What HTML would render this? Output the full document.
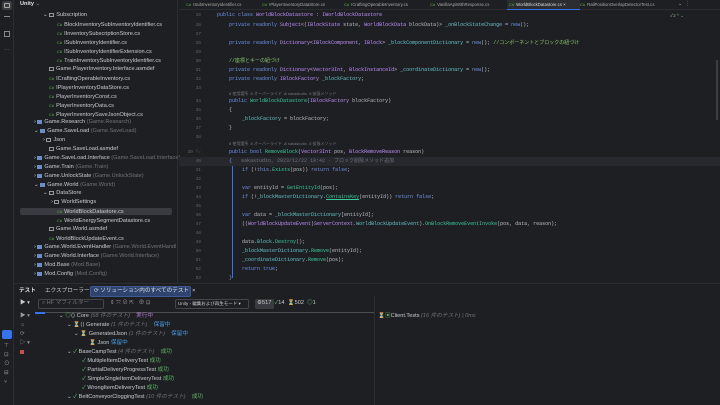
<!DOCTYPE html>
<html><head><meta charset="utf-8"><style>
*{margin:0;padding:0;box-sizing:border-box}
body{width:720px;height:405px;overflow:hidden;background:#1e1f22;font-family:"Liberation Sans","Noto Sans CJK JP",sans-serif;color:#c9ccd1;position:relative}
.a{position:absolute;white-space:nowrap}
.s{font-size:5.6px;line-height:9px}
.g{color:#6f737a}
.m{font-family:"Liberation Mono","Noto Sans CJK JP",monospace;font-size:5px;line-height:9px;color:#bcbec4}
.k{color:#6c95eb}.t{color:#c191ff}.f{color:#66c3cc}.mt{color:#39cc9b}.c{color:#85c46c}.h{color:#6f737a;font-size:4px}
.ln{position:absolute;left:183px;width:18px;text-align:right;font-family:"Liberation Mono",monospace;font-size:4.5px;color:#5f636b;line-height:9px}
.ic{display:inline-block;width:5px;height:4px;margin-right:2px;vertical-align:middle}
.cs{color:#62b543;font-size:4px;margin-right:2px}
</style></head><body>
<!-- activity bar -->
<div class="a" style="left:0;top:0;width:14px;height:405px;background:#1e1f22;border-right:1px solid #2b2d30"></div>
<div class="a" style="left:2px;top:1px;width:10px;height:9px;background:#3a3d41;border-radius:2px"></div>
<div class="a" style="left:4px;top:3px;width:6px;height:5px;border:1px solid #aaa;border-radius:1px"></div>
<div class="a" style="left:4px;top:16px;width:6px;height:1px;background:#888"></div>
<div class="a" style="left:4px;top:31px;width:6px;height:6px;border:1px solid #888"></div>
<div class="a" style="left:4px;top:47px;color:#888;font-size:5px">···</div>
<!-- sidebar -->
<div class="a" style="left:14px;top:0;width:164px;height:283px;background:#1e1f22;border-right:1px solid #2b2d30"></div>
<div class="a s" style="left:20px;top:0;color:#dfe1e5;font-weight:bold">Unity <span class="g">⌄</span></div>
<div class="a" style="left:20px;top:208px;width:152px;height:7px;background:#393b40;border-radius:2px"></div>
<div class="a s" style="left:43px;top:11px">⌄ <span class="ic" style="border:1px solid #999"></span>Subscription</div>
<div class="a s" style="left:57px;top:20px"><span class="cs">C#</span>BlockInventorySubInventoryIdentifier.cs</div>
<div class="a s" style="left:57px;top:29px"><span class="cs">C#</span>IInventorySubscriptionStore.cs</div>
<div class="a s" style="left:57px;top:38px"><span class="cs">C#</span>ISubInventoryIdentifier.cs</div>
<div class="a s" style="left:57px;top:47px"><span class="cs">C#</span>ISubInventoryIdentifierExtension.cs</div>
<div class="a s" style="left:57px;top:56px"><span class="cs">C#</span>TrainInventorySubInventoryIdentifier.cs</div>
<div class="a s" style="left:49px;top:65px"><span class="ic" style="border:1px solid #999"></span>Game.PlayerInventory.Interface.asmdef</div>
<div class="a s" style="left:49px;top:74px"><span class="cs">C#</span>ICraftingOperableInventory.cs</div>
<div class="a s" style="left:49px;top:83px"><span class="cs">C#</span>IPlayerInventoryDataStore.cs</div>
<div class="a s" style="left:49px;top:92px"><span class="cs">C#</span>PlayerInventoryConst.cs</div>
<div class="a s" style="left:49px;top:101px"><span class="cs">C#</span>PlayerInventoryData.cs</div>
<div class="a s" style="left:49px;top:110px"><span class="cs">C#</span>PlayerInventorySaveJsonObject.cs</div>
<div class="a s" style="left:34px;top:118px">› <span class="ic" style="background:#6a8fc7"></span>Game.Research <span class="g">(Game.Research)</span></div>
<div class="a s" style="left:34px;top:127px">⌄ <span class="ic" style="background:#6a8fc7"></span>Game.SaveLoad <span class="g">(Game.SaveLoad)</span></div>
<div class="a s" style="left:43px;top:136px">› <span class="ic" style="border:1px solid #999"></span>Json</div>
<div class="a s" style="left:49px;top:145px"><span class="ic" style="border:1px solid #999"></span>Game.SaveLoad.asmdef</div>
<div class="a s" style="left:34px;top:154px">› <span class="ic" style="background:#6a8fc7"></span>Game.SaveLoad.Interface <span class="g">(Game.SaveLoad.Interface)</span></div>
<div class="a s" style="left:34px;top:163px">› <span class="ic" style="background:#6a8fc7"></span>Game.Train <span class="g">(Game.Train)</span></div>
<div class="a s" style="left:34px;top:172px">› <span class="ic" style="background:#6a8fc7"></span>Game.UnlockState <span class="g">(Game.UnlockState)</span></div>
<div class="a s" style="left:34px;top:181px">⌄ <span class="ic" style="background:#6a8fc7"></span>Game.World <span class="g">(Game.World)</span></div>
<div class="a s" style="left:43px;top:189px">⌄ <span class="ic" style="border:1px solid #999"></span>DataStore</div>
<div class="a s" style="left:51px;top:198px">› <span class="ic" style="border:1px solid #999"></span>WorldSettings</div>
<div class="a s" style="left:57px;top:207px"><span class="cs">C#</span>WorldBlockDatastore.cs</div>
<div class="a s" style="left:57px;top:216px"><span class="cs">C#</span>WorldEnergySegmentDatastore.cs</div>
<div class="a s" style="left:49px;top:225px"><span class="ic" style="border:1px solid #999"></span>Game.World.asmdef</div>
<div class="a s" style="left:49px;top:234px"><span class="cs">C#</span>WorldBlockUpdateEvent.cs</div>
<div class="a s" style="left:34px;top:243px">› <span class="ic" style="background:#6a8fc7"></span>Game.World.EventHandler <span class="g">(Game.World.EventHandl</span></div>
<div class="a s" style="left:34px;top:252px">› <span class="ic" style="background:#6a8fc7"></span>Game.World.Interface <span class="g">(Game.World.Interface)</span></div>
<div class="a s" style="left:34px;top:261px">› <span class="ic" style="background:#6a8fc7"></span>Mod.Base <span class="g">(Mod.Base)</span></div>
<div class="a s" style="left:34px;top:270px">› <span class="ic" style="background:#6a8fc7"></span>Mod.Config <span class="g">(Mod.Config)</span></div>
<!-- tabs -->
<div class="a" style="left:179px;top:0;width:541px;height:10px;border-bottom:1px solid #2b2d30"></div>
<div class="a" style="left:507px;top:0;width:73px;height:10px;background:#2b2d30;border-bottom:1px solid #3574f0"></div>
<div class="a" style="font-size:4.3px;top:2px;left:186px;color:#aaa;white-space:nowrap"><span class="cs">C#</span>ISubInventoryIdentifier.cs</div>
<div class="a" style="font-size:4.3px;top:2px;left:262px;color:#aaa"><span class="cs">C#</span>IPlayerInventoryDataStore.cs</div>
<div class="a" style="font-size:4.3px;top:2px;left:344px;color:#aaa"><span class="cs">C#</span>ICraftingOperableInventory.cs</div>
<div class="a" style="font-size:4.3px;top:2px;left:430px;color:#aaa"><span class="cs">C#</span>VanillaApiWithResponse.cs</div>
<div class="a" style="font-size:4.3px;top:2px;left:509px;color:#ddd"><span class="cs">C#</span>WorldBlockDatastore.cs ×</div>
<div class="a" style="font-size:4.3px;top:2px;left:580px;color:#aaa"><span class="cs">C#</span>RailPositionOverlapDetectorTest.cs</div>
<div class="a" style="font-size:5px;top:1px;left:678px;color:#aaa">⌄ &nbsp;⋮</div>
<div class="a" style="font-size:4.5px;top:13px;left:670px;color:#8a8">✓2 ^ ⌄</div>
<!-- editor -->
<div class="a" style="left:179px;top:157px;width:541px;height:9px;background:#26282e"></div>
<div class="a" style="left:232px;top:166px;width:1px;height:112px;background:#3574f0"></div>
<div class="ln" style="top:11px">19</div><div class="a m" style="left:217px;top:11px"><span class="k">public class</span> <span class="t">WorldBlockDatastore</span> : <span class="t">IWorldBlockDatastore</span></div>
<div class="ln" style="top:21px">26</div><div class="a m" style="left:229px;top:21px"><span class="k">private readonly</span> <span class="t">Subject</span>&lt;(<span class="t">IBlockState</span> state, <span class="t">WorldBlockData</span> blockData)&gt; <span class="f">_onBlockStateChange</span> = <span class="k">new</span>();</div>
<div class="ln" style="top:30px">27</div>
<div class="ln" style="top:39px">28</div><div class="a m" style="left:229px;top:39px"><span class="k">private readonly</span> <span class="t">Dictionary</span>&lt;<span class="t">IBlockComponent</span>, <span class="t">IBlock</span>&gt; <span class="f">_blockComponentDictionary</span> = <span class="k">new</span>(); <span class="c">//コンポーネントとブロックの紐づけ</span></div>
<div class="ln" style="top:48px">29</div>
<div class="ln" style="top:57px">30</div><div class="a m c" style="left:229px;top:57px">//座標とキーの紐づけ</div>
<div class="ln" style="top:66px">31</div><div class="a m" style="left:229px;top:66px"><span class="k">private readonly</span> <span class="t">Dictionary</span>&lt;<span class="t">Vector3Int</span>, <span class="t">BlockInstanceId</span>&gt; <span class="f">_coordinateDictionary</span> = <span class="k">new</span>();</div>
<div class="ln" style="top:75px">32</div><div class="a m" style="left:229px;top:75px"><span class="k">private readonly</span> <span class="t">IBlockFactory</span> <span class="f">_blockFactory</span>;</div>
<div class="ln" style="top:84px">33</div>
<div class="a h" style="left:229px;top:91px">8 使用箇所 &nbsp;8 オーバーライド &nbsp;Ⱥ sakastudio &nbsp;8 拡張メソッド</div>
<div class="ln" style="top:97px">34</div><div class="a m" style="left:229px;top:97px"><span class="k">public</span> <span class="mt">WorldBlockDatastore</span>(<span class="t">IBlockFactory</span> blockFactory)</div>
<div class="ln" style="top:106px">35</div><div class="a m" style="left:229px;top:106px">{</div>
<div class="ln" style="top:115px">36</div><div class="a m" style="left:242px;top:115px"><span class="f">_blockFactory</span> = blockFactory;</div>
<div class="ln" style="top:124px">37</div><div class="a m" style="left:229px;top:124px">}</div>
<div class="ln" style="top:133px">38</div>
<div class="a h" style="left:229px;top:141px">8 使用箇所 &nbsp;8 オーバーライド &nbsp;Ⱥ sakastudio &nbsp;8 拡張メソッド</div>
<div class="ln" style="top:148px">39 ⁰⁄</div><div class="a m" style="left:229px;top:148px"><span class="k">public bool</span> <span class="mt">RemoveBlock</span>(<span class="t">Vector3Int</span> pos, <span class="t">BlockRemoveReason</span> reason)</div>
<div class="ln" style="top:157px">40</div><div class="a m" style="left:229px;top:157px"><span class="k">{</span> &nbsp; <span class="g">sakastudio, 2023/12/22 19:42 · ブロック削除メソッド追加</span></div>
<div class="ln" style="top:166px">41</div><div class="a m" style="left:242px;top:166px"><span class="k">if</span> (!<span class="k">this</span>.<span class="mt">Exists</span>(pos)) <span class="k">return false</span>;</div>
<div class="ln" style="top:175px">42</div>
<div class="ln" style="top:184px">43</div><div class="a m" style="left:242px;top:184px"><span class="k">var</span> entityId = <span class="mt">GetEntityId</span>(pos);</div>
<div class="ln" style="top:193px">44</div><div class="a m" style="left:242px;top:193px"><span class="k">if</span> (!<span class="f">_blockMasterDictionary</span>.<span class="mt" style="text-decoration:underline">ContainsKey</span>(entityId)) <span class="k">return false</span>;</div>
<div class="ln" style="top:202px">45</div>
<div class="ln" style="top:211px">46</div><div class="a m" style="left:242px;top:211px"><span class="k">var</span> data = <span class="f">_blockMasterDictionary</span>[entityId];</div>
<div class="ln" style="top:220px">47</div><div class="a m" style="left:242px;top:220px">((<span class="t">WorldBlockUpdateEvent</span>)<span class="t">ServerContext</span>.<span class="f">WorldBlockUpdateEvent</span>).<span class="mt">OnBlockRemoveEventInvoke</span>(pos, data, reason);</div>
<div class="ln" style="top:229px">48</div>
<div class="ln" style="top:238px">49</div><div class="a m" style="left:242px;top:238px">data.<span class="f">Block</span>.<span class="mt">Destroy</span>();</div>
<div class="ln" style="top:247px">50</div><div class="a m" style="left:242px;top:247px"><span class="f">_blockMasterDictionary</span>.<span class="mt">Remove</span>(entityId);</div>
<div class="ln" style="top:256px">51</div><div class="a m" style="left:242px;top:256px"><span class="f">_coordinateDictionary</span>.<span class="mt">Remove</span>(pos);</div>
<div class="ln" style="top:265px">52</div><div class="a m" style="left:242px;top:265px"><span class="k">return true</span>;</div>
<div class="ln" style="top:274px">53</div><div class="a m" style="left:229px;top:274px"><span class="k">}</span></div>
<div class="a" style="left:716px;top:60px;width:2px;height:60px;background:#3a3d42"></div>
<!-- bottom panel -->
<div class="a" style="left:14px;top:283px;width:706px;height:122px;background:#1e1f22;border-top:1px solid #2b2d30"></div>
<div class="a s" style="left:19px;top:287px;color:#dfe1e5;font-weight:bold">テスト</div>
<div class="a s" style="left:45px;top:287px">エクスプローラー</div>
<div class="a" style="left:90px;top:286px;width:101px;height:11px;background:#2e436e;border:1px solid #3d5a95;border-radius:2px"></div>
<div class="a s" style="left:94px;top:287px;color:#dfe1e5">⟳ ソリューション内のすべてのテスト &nbsp;×</div>
<div class="a s" style="left:20px;top:299px">▶ ▾</div>
<div class="a" style="left:38px;top:299px;width:66px;height:10px;border:1px solid #43454a;border-radius:2px"></div>
<div class="a s g" style="left:42px;top:299px">⌕ HF マフィルター</div>
<div class="a s" style="left:110px;top:299px;color:#999">⇕ ⤧ ⊘ ⇱ &nbsp; ⊕ ⊡</div>
<div class="a" style="left:175px;top:299px;width:74px;height:10px;border:1px solid #43454a;border-radius:2px"></div>
<div class="a" style="left:178px;top:299px;font-size:4.5px;line-height:9px">Unity - 編集および再生モード ▾</div>
<div class="a" style="left:255px;top:299px;width:19px;height:10px;background:#393b40;border-radius:2px"></div>
<div class="a s" style="left:257px;top:299px">⚙517 &nbsp;<span style="color:#5fb865">✓</span>14 &nbsp;⏳502 &nbsp;<span style="color:#5fb865">◎</span>1</div>
<div class="a" style="left:35px;top:312px;width:340px;height:1px;background:#4a4d52"></div>
<div class="a" style="left:35px;top:312px;width:10px;height:2px;background:#3574f0"></div>
<div class="a" style="left:374px;top:296px;width:1px;height:109px;background:#2b2d30"></div>
<div class="a s" style="left:20px;top:312px;color:#999">▶ ▾</div>
<div class="a s" style="left:20px;top:321px;color:#999">☼</div>
<div class="a s" style="left:20px;top:330px;color:#999">⟳</div>
<div class="a s" style="left:20px;top:339px;color:#999">▷ ▾</div>
<div class="a" style="left:20px;top:350px;width:4px;height:4px;background:#c94f4f"></div>
<div class="a" style="left:2px;top:330px;width:10px;height:9px;background:#3574f0;border-radius:2px"></div>
<div class="a s" style="left:4px;top:342px;color:#999">⊤<br>⊡<br>⊙<br>⊟<br>⑂</div>
<div class="a s" style="left:59px;top:312px">⌄ <span style="color:#5fb865">◎</span>⟨⟩ Core <span class="g"><i>(68 件のテスト)</i></span> &nbsp; &nbsp;<span style="color:#b47cd8">実行中</span></div>
<div class="a s" style="left:67px;top:321px">⌄ ⏳⟨⟩ Generate <span class="g"><i>(1 件のテスト)</i></span> &nbsp; &nbsp;<span style="color:#4a9ee8">保留中</span></div>
<div class="a s" style="left:74px;top:330px">⌄ ⏳ GeneratedJson <span class="g"><i>(1 件のテスト)</i></span> &nbsp; &nbsp;<span style="color:#4a9ee8">保留中</span></div>
<div class="a s" style="left:89px;top:339px">⏳ Json <span style="color:#4a9ee8">保留中</span></div>
<div class="a s" style="left:67px;top:348px">⌄ <span style="color:#5fb865">✓</span> BaseCampTest <span class="g"><i>(4 件のテスト)</i></span> &nbsp; &nbsp;<span style="color:#5fb865">成功</span></div>
<div class="a s" style="left:82px;top:357px"><span style="color:#5fb865">✓</span> MultipleItemDeliveryTest <span style="color:#5fb865">成功</span></div>
<div class="a s" style="left:82px;top:366px"><span style="color:#5fb865">✓</span> PartialDeliveryProgressTest <span style="color:#5fb865">成功</span></div>
<div class="a s" style="left:82px;top:375px"><span style="color:#5fb865">✓</span> SimpleSingleItemDeliveryTest <span style="color:#5fb865">成功</span></div>
<div class="a s" style="left:82px;top:384px"><span style="color:#5fb865">✓</span> WrongItemDeliveryTest <span style="color:#5fb865">成功</span></div>
<div class="a s" style="left:67px;top:393px">⌄ <span style="color:#5fb865">✓</span> BeltConveyorCloggingTest <span class="g"><i>(10 件のテスト)</i></span> &nbsp; &nbsp;<span style="color:#5fb865">成功</span></div>
<div class="a s" style="left:378px;top:312px">⏳<span style="color:#5fb865">▣</span>Client.Tests <span class="g"><i>(16 件のテスト) | 0ms</i></span></div>
</body></html>
